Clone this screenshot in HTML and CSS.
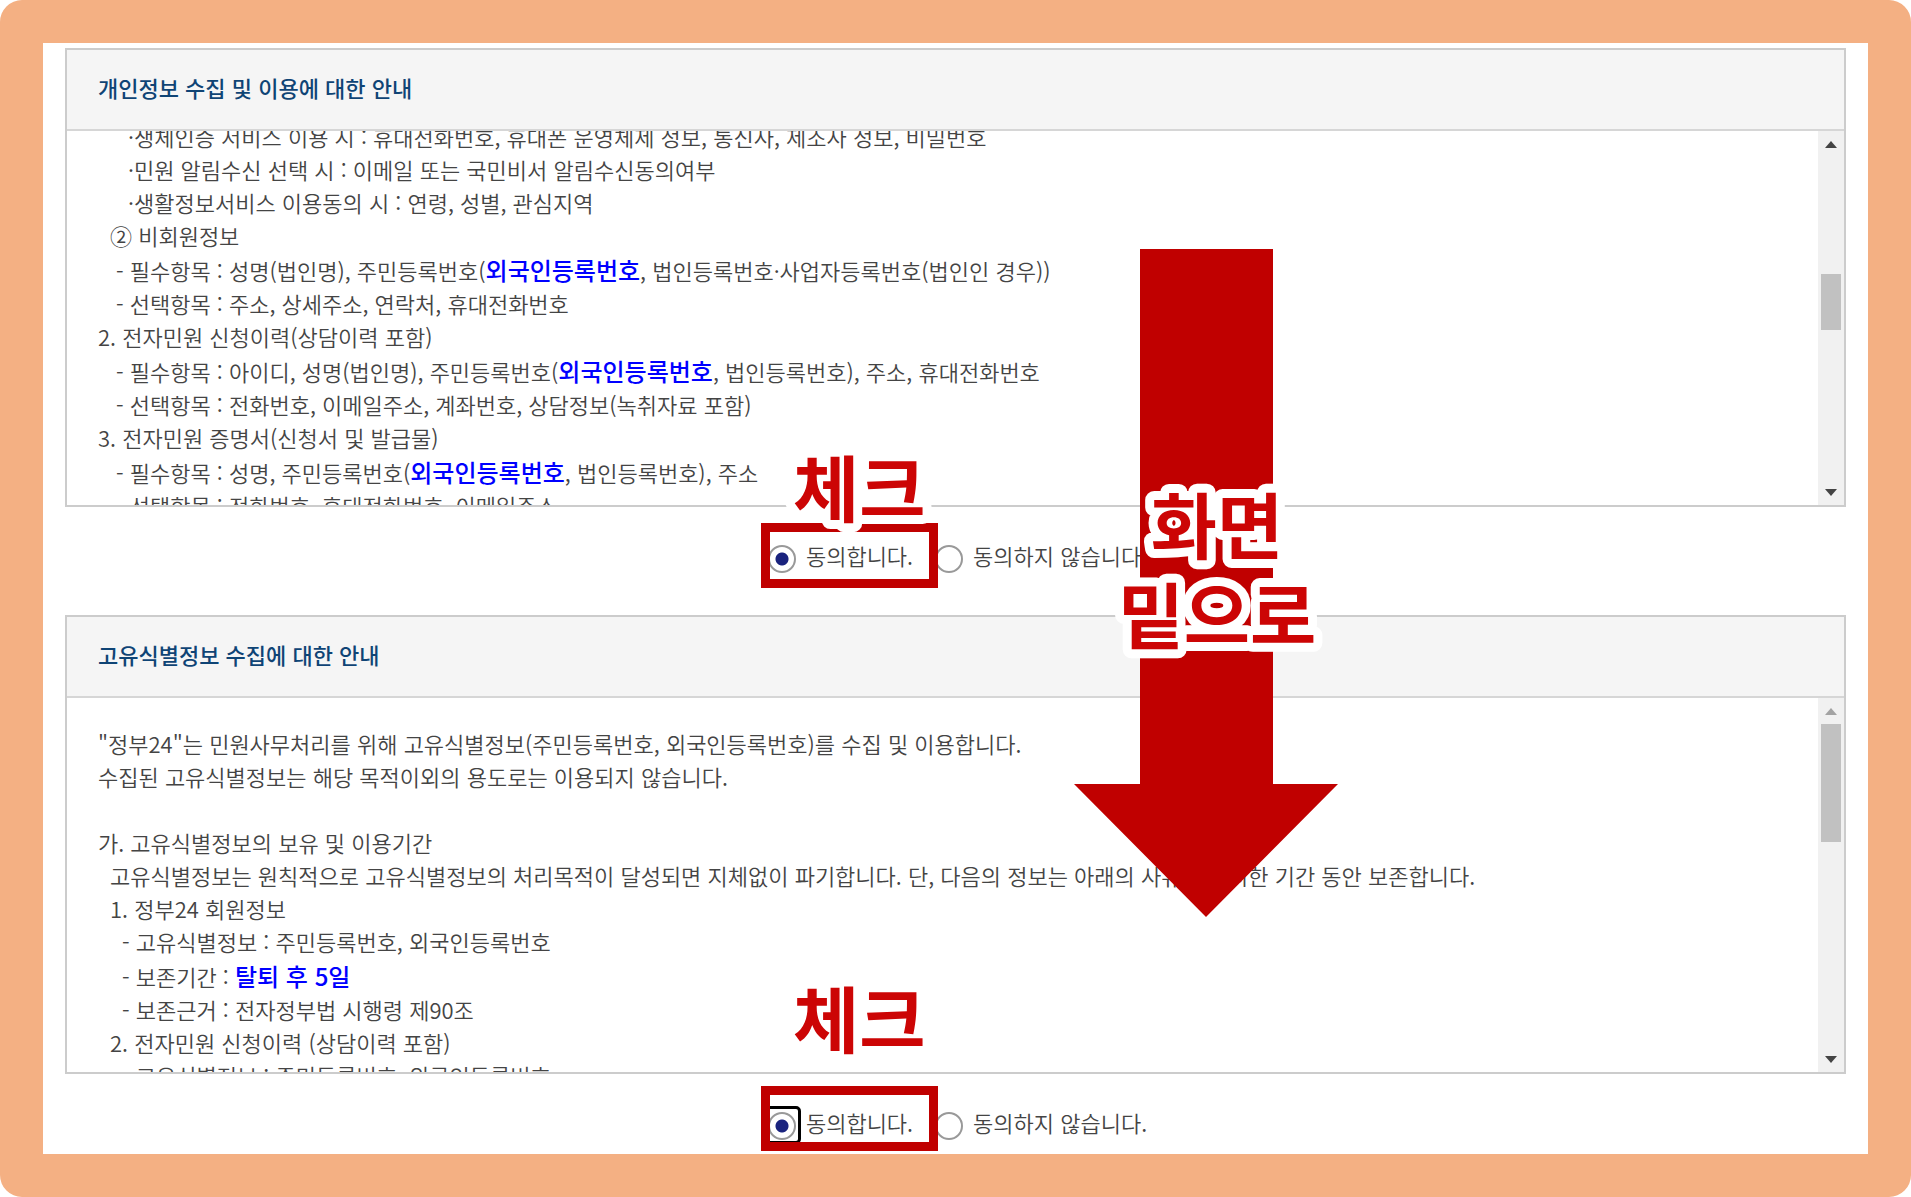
FILE: index.html
```html
<!DOCTYPE html>
<html lang="ko">
<head>
<meta charset="utf-8">
<meta name="viewport" content="width=device-width, initial-scale=1">
<title>정부24 개인정보 수집 동의</title>
<link rel="stylesheet" href="styles.css">
</head>
<body>
<main class="frame">
  <section class="panel">
    <h2 class="panel-title">개인정보 수집 및 이용에 대한 안내</h2>
    <div class="panel-body">
      <div class="terms terms-scrolled">
        <p class="in-4">·생체인증 서비스 이용 시 : 휴대전화번호, 휴대폰 운영체제 정보, 통신사, 제조사 정보, 비밀번호</p>
        <p class="in-4">·민원 알림수신 선택 시 : 이메일 또는 국민비서 알림수신동의여부</p>
        <p class="in-4">·생활정보서비스 이용동의 시 : 연령, 성별, 관심지역</p>
        <p class="in-1">② 비회원정보</p>
        <p class="in-2">- 필수항목 : 성명(법인명), 주민등록번호(<strong>외국인등록번호</strong>, 법인등록번호·사업자등록번호(법인인 경우))</p>
        <p class="in-2">- 선택항목 : 주소, 상세주소, 연락처, 휴대전화번호</p>
        <p>2. 전자민원 신청이력(상담이력 포함)</p>
        <p class="in-2">- 필수항목 : 아이디, 성명(법인명), 주민등록번호(<strong>외국인등록번호</strong>, 법인등록번호), 주소, 휴대전화번호</p>
        <p class="in-2">- 선택항목 : 전화번호, 이메일주소, 계좌번호, 상담정보(녹취자료 포함)</p>
        <p>3. 전자민원 증명서(신청서 및 발급물)</p>
        <p class="in-2">- 필수항목 : 성명, 주민등록번호(<strong>외국인등록번호</strong>, 법인등록번호), 주소</p>
        <p class="in-2">- 선택항목 : 전화번호, 휴대전화번호, 이메일주소</p>
      </div>
      <div class="scrollbar">
        <button class="scroll-btn" type="button" aria-label="위로"><svg width="12" height="7" viewBox="0 0 12 7"><path d="M0 7L6 0L12 7Z"/></svg></button>
        <div class="track"><div class="thumb thumb-middle"></div></div>
        <button class="scroll-btn" type="button" aria-label="아래로"><svg width="12" height="7" viewBox="0 0 12 7"><path d="M0 0L6 7L12 0Z"/></svg></button>
      </div>
    </div>
  </section>
  <div class="consent">
    <div class="option">
      <input type="radio" id="privacy-yes" name="privacy" checked>
      <label for="privacy-yes">동의합니다.</label>
      <span class="mark-box"></span>
      <svg class="mark-text" width="140" height="80"><text x="5" y="63">체크</text></svg>
    </div>
    <div class="option">
      <input type="radio" id="privacy-no" name="privacy">
      <label for="privacy-no">동의하지 않습니다.</label>
    </div>
  </div>

  <section class="panel">
    <h2 class="panel-title">고유식별정보 수집에 대한 안내</h2>
    <div class="panel-body">
      <div class="terms">
        <p>"정부24"는 민원사무처리를 위해 고유식별정보(주민등록번호, 외국인등록번호)를 수집 및 이용합니다.</p>
        <p>수집된 고유식별정보는 해당 목적이외의 용도로는 이용되지 않습니다.</p>
        <p><br></p>
        <p>가. 고유식별정보의 보유 및 이용기간</p>
        <p class="in-1">고유식별정보는 원칙적으로 고유식별정보의 처리목적이 달성되면 지체없이 파기합니다. 단, 다음의 정보는 아래의 사유로 명시한 기간 동안 보존합니다.</p>
        <p class="in-1">1. 정부24 회원정보</p>
        <p class="in-3">- 고유식별정보 : 주민등록번호, 외국인등록번호</p>
        <p class="in-3">- 보존기간 : <strong>탈퇴 후 5일</strong></p>
        <p class="in-3">- 보존근거 : 전자정부법 시행령 제90조</p>
        <p class="in-1">2. 전자민원 신청이력 (상담이력 포함)</p>
        <p class="in-3">- 고유식별정보 : 주민등록번호, 외국인등록번호</p>
      </div>
      <div class="scrollbar">
        <button class="scroll-btn at-end" type="button" aria-label="위로"><svg width="12" height="7" viewBox="0 0 12 7"><path d="M0 7L6 0L12 7Z"/></svg></button>
        <div class="track"><div class="thumb thumb-top"></div></div>
        <button class="scroll-btn" type="button" aria-label="아래로"><svg width="12" height="7" viewBox="0 0 12 7"><path d="M0 0L6 7L12 0Z"/></svg></button>
      </div>
    </div>
  </section>
  <div class="consent consent-last">
    <div class="option focused">
      <input type="radio" id="ident-yes" name="ident" checked>
      <label for="ident-yes">동의합니다.</label>
      <span class="mark-box"></span>
      <svg class="mark-text" width="140" height="80"><text x="5" y="63">체크</text></svg>
    </div>
    <div class="option">
      <input type="radio" id="ident-no" name="ident">
      <label for="ident-no">동의하지 않습니다.</label>
    </div>
  </div>

  <svg class="guide" width="264" height="668" viewBox="0 0 264 668">
    <path d="M66 0H199V535H264L132 668L0 535H66Z"/>
    <text x="143" y="304" text-anchor="middle">화면</text>
    <text x="143" y="394" text-anchor="middle">밑으로</text>
  </svg>
</main>
</body>
</html>
```
FILE: styles.css
```css
*,
*::before {
  box-sizing: border-box;
}

body {
  margin: 0;
  background: #fff;
  color: #444;
  font-family: "Noto Sans CJK KR", sans-serif;
  font-size: 22px;
  line-height: 33px;
}

h2,
p {
  margin: 0;
}

.frame {
  position: relative;
  min-height: 100vh;
  padding: 5px 22px 0;
  border: 43px solid #f4b083;
  border-radius: 22px;
  overflow: hidden;
}

/* Terms panels */
.panel {
  border: 2px solid #ccc;
}

.panel-title {
  padding: 21px 31px 25px;
  border-bottom: 2px solid #d6d6d6;
  background: #f5f5f5;
  color: #0f4475;
  font-size: 22px;
  font-weight: 500;
}

.panel-body {
  display: flex;
  height: 374px;
}

.terms {
  flex: 1;
  min-width: 0;
  padding: 29px 31px 0;
  overflow: hidden;
  font-weight: 350;
}

.terms-scrolled {
  margin-top: -11px;
  padding-top: 0;
  clip-path: inset(11px 0 0);
}

.terms strong {
  color: #00f;
  font-size: 24px;
  font-weight: 500;
  line-height: 35px;
}

.in-1 { padding-left: 12px; }
.in-2 { padding-left: 18px; }
.in-3 { padding-left: 24px; }
.in-4 { padding-left: 30px; }

/* Scroll bar */
.scrollbar {
  display: flex;
  flex-direction: column;
  width: 26px;
  background: #f1f1f1;
}

.scroll-btn {
  display: flex;
  align-items: center;
  justify-content: center;
  height: 26px;
  padding: 0;
  border: 0;
  background: none;
  fill: #444;
}

.at-end {
  fill: #a3a3a3;
}

.track {
  flex: 1;
  padding: 0 3px;
}

.thumb {
  background: #c1c1c1;
}

.thumb-middle {
  height: 56px;
  transform: translateY(117px);
}

.thumb-top {
  height: 118px;
}

/* Consent choices */
.consent {
  display: flex;
  justify-content: center;
  gap: 22px;
  padding: 35px 0 40px 4px;
}

.consent-last {
  padding-bottom: 12px;
}

.option {
  position: relative;
  display: flex;
  align-items: center;
  gap: 10px;
  height: 33px;
  font-weight: 350;
}

.option label {
  margin-bottom: 7px;
  line-height: 28px;
}

.option input {
  appearance: none;
  width: 28px;
  height: 28px;
  margin: 0;
  border: 2px solid #999;
  border-radius: 50%;
  background: #fff;
}

.option input:checked {
  background: radial-gradient(circle, #1a237e 6px, #fff 7px);
}

/* Keyboard focus ring round the radio */
.focused::before {
  content: "";
  position: absolute;
  top: -3px;
  left: -5px;
  width: 38px;
  height: 38px;
  border: 3px solid #000;
  border-radius: 5px;
}

.mark-box {
  position: absolute;
  z-index: 1;
  top: -19px;
  left: -7px;
  width: 177px;
  height: 65px;
  border: 9px solid #c00000;
  pointer-events: none;
}

.mark-text {
  position: absolute;
  z-index: 1;
  top: -89px;
  left: 20px;
  overflow: visible;
  pointer-events: none;
}

.focused .mark-box {
  top: -23px;
}

.focused .mark-text {
  top: -125px;
}

.mark-text text,
.guide text {
  fill: #cc0505;
  stroke: #fff;
  stroke-width: 18px;
  stroke-linejoin: round;
  paint-order: stroke fill;
  font-size: 72px;
  font-weight: 700;
}

/* Arrow that points down the page */
.guide {
  position: absolute;
  z-index: 2;
  top: 206px;
  left: calc(50% + 118px);
  overflow: visible;
  pointer-events: none;
}

.guide path {
  fill: #c00000;
}
```
